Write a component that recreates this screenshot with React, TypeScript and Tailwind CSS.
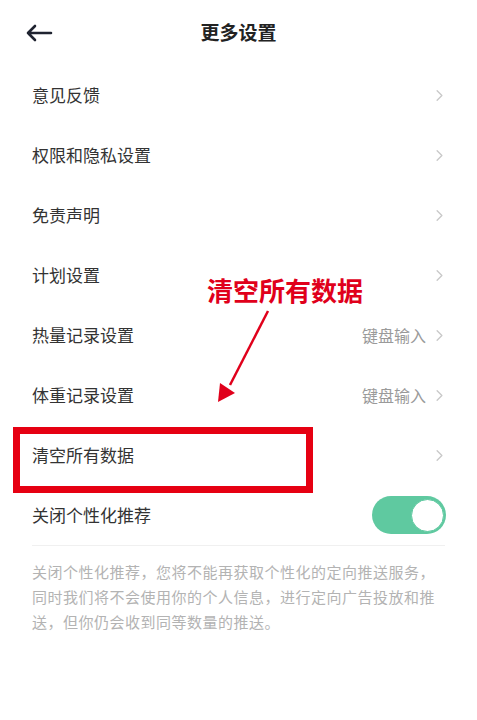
import { ChevronRight } from "lucide-react";

const rows = [
  { label: "意见反馈" },
  { label: "权限和隐私设置" },
  { label: "免责声明" },
  { label: "计划设置" },
  { label: "热量记录设置", value: "键盘输入" },
  { label: "体重记录设置", value: "键盘输入" },
];

const noteLines = [
  "关闭个性化推荐，您将不能再获取个性化的定向推送服务，",
  "同时我们将不会使用你的个人信息，进行定向广告投放和推",
  "送，但你仍会收到同等数量的推送。",
];

function Row({ label, value }: { label: string; value?: string }) {
  return (
    <div className="flex h-[60px] items-center justify-between pl-8 pr-[28px]">
      <span className="text-[17px] text-[#333]">{label}</span>
      <div className="flex items-center gap-1">
        {value && <span className="text-[16px] text-[#9a9a9a]">{value}</span>}
        <ChevronRight className="h-[19px] w-[19px] text-[#c9c9c9]" strokeWidth={1.7} />
      </div>
    </div>
  );
}

export default function App() {
  return (
    <div
      className="relative min-h-screen w-[477px] bg-white"
      style={{ fontFamily: '"Noto Sans CJK SC", "Noto Sans", sans-serif' }}
    >
      {/* Header */}
      <div className="relative flex h-[65px] items-center justify-center">
        <svg className="absolute left-[25px] top-[23px]" width="28" height="20" viewBox="0 0 28 20" fill="none">
          <path d="M26 10H3M10 3L3 10L10 17" stroke="#1f2330" strokeWidth="2.6" strokeLinecap="round" strokeLinejoin="round" />
        </svg>
        <h1 className="text-[19px] font-bold text-[#222]">更多设置</h1>
      </div>

      {rows.map((r) => (
        <Row key={r.label} {...r} />
      ))}

      {/* Clear data row with highlight box */}
      <div className="relative">
        <Row label="清空所有数据" />
        <div className="absolute left-[13px] top-[2px] h-[66px] w-[300px] border-[7px] border-[#e60012]" />
      </div>

      {/* Toggle row */}
      <div className="flex h-[60px] items-center justify-between pl-8 pr-[31px]">
        <span className="text-[17px] text-[#333]">关闭个性化推荐</span>
        <div className="flex h-[38px] w-[74px] items-center justify-end rounded-full bg-[#5fc9a0] pr-[2px]">
          <div className="h-[33px] w-[33px] rounded-full border border-[#5fc9a0] bg-white" />
        </div>
      </div>

      <div className="mx-8 border-t border-[#f0f0f0]" />

      <div className="mt-[13px] flex flex-col pl-8 text-[15px] leading-[25px] tracking-[0.5px] text-[#b3b3b3]">
        {noteLines.map((l) => (
          <span key={l} className="whitespace-nowrap">{l}</span>
        ))}
      </div>

      {/* Annotation */}
      <div className="absolute left-[207px] top-[273px] text-[26px] font-bold leading-[34px] text-[#e0001b]">
        清空所有数据
      </div>
      <svg className="absolute left-[210px] top-[305px]" width="70" height="105" viewBox="0 0 70 105" fill="none">
        <line x1="58" y1="6" x2="20" y2="80" stroke="#e0001b" strokeWidth="2.5" />
        <polygon points="8,97 10,78 25,88" fill="#e0001b" />
      </svg>
    </div>
  );
}
